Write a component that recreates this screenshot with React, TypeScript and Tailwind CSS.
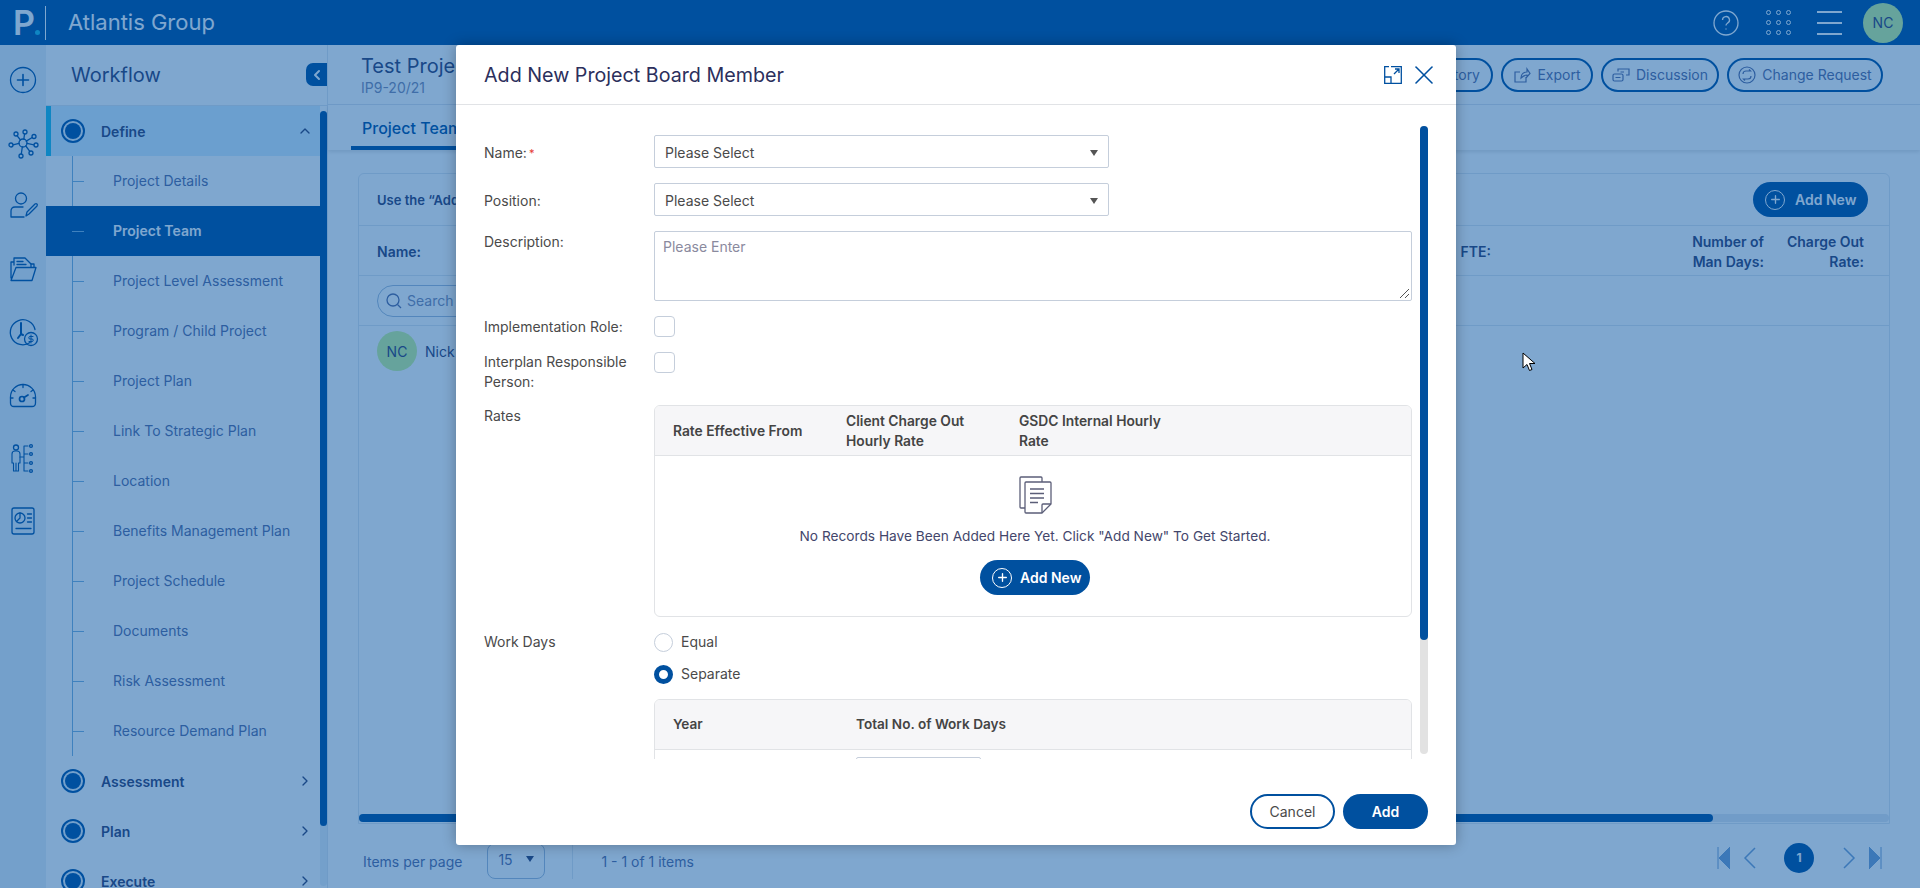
import React from 'react';
import { ChevronLeft, ChevronUp, ChevronRight, Plus, X } from 'lucide-react';

const font = { fontFamily: 'Inter, "Liberation Sans", sans-serif' };

const defineItems = [
  'Project Details',
  'Project Team',
  'Project Level Assessment',
  'Program / Child Project',
  'Project Plan',
  'Link To Strategic Plan',
  'Location',
  'Benefits Management Plan',
  'Project Schedule',
  'Documents',
  'Risk Assessment',
  'Resource Demand Plan',
];

const RailIcon = ({ children }: { children: React.ReactNode }) => (
  <div className="h-[63px] flex items-center justify-center">
    <svg width="32" height="32" viewBox="0 0 32 32" fill="none" stroke="#0050a0" strokeWidth="1.3" strokeLinecap="round" strokeLinejoin="round">
      {children}
    </svg>
  </div>
);

const Rail = () => (
  <aside className="w-[46px] shrink-0 bg-[#e8f0f7] flex flex-col pt-[3px]">
    <RailIcon>
      <circle cx="16" cy="16" r="12.5" />
      <path d="M16 10.5v11M10.5 16h11" strokeWidth="1.6" />
    </RailIcon>
    <RailIcon>
      <circle cx="16" cy="16" r="4" />
      <circle cx="9" cy="7" r="2" /><circle cx="18" cy="5" r="2" /><circle cx="27" cy="9.5" r="2" /><circle cx="29" cy="18" r="2" />
      <circle cx="24" cy="26" r="2" /><circle cx="14" cy="29" r="2" /><circle cx="4" cy="18" r="2" />
      <path d="M10 8.6l3.5 4.4M17.6 7l-.8 5M25.2 10.5l-6 3.6M27 17.8l-7-1.4M22.8 24.4l-4-5.4M14.3 27l1-7M6 17.8l6-1.4" />
    </RailIcon>
    <RailIcon>
      <circle cx="14" cy="8.5" r="5.5" />
      <path d="M16 17H8c-2.8 0-4 2-4 4v6h13" />
      <path d="M19 26l1-4 8-8c1.5-1 3 .5 2 2l-8 8z" />
    </RailIcon>
    <RailIcon>
      <path d="M4 25V9h3M7 12V5h11l6 6v3M10 8.5h6M10 11.5h9M4 27.5h21l4-13H9L4 27.5z" />
      <path d="M24 11h3v3" />
    </RailIcon>
    <RailIcon>
      <path d="M23 26.5A12.5 12.5 0 1 1 28 13.5" />
      <path d="M14 7v11l-3 4M14 18l2 1" strokeWidth="2" />
      <circle cx="24" cy="23" r="6.5" />
      <path d="M26 20.5h-3a1.2 1.2 0 0 0 0 2.5h2a1.2 1.2 0 0 1 0 2.5h-3M24 19v8" strokeWidth="1" />
    </RailIcon>
    <RailIcon>
      <path d="M7 27.5h18c2 0 3.5-1.5 3.5-3.5V18A12.5 12.5 0 0 0 3.5 18v6c0 2 1.5 3.5 3.5 3.5z" />
      <path d="M16 5.5v3M6 11l2 1.5M26 11l-2 1.5M3.5 19H6M28.500 19H26" />
      <circle cx="15" cy="20" r="2.5" strokeWidth="1.7" />
      <path d="M17 18.5l4-2.5" strokeWidth="1.7" />
    </RailIcon>
    <RailIcon>
      <circle cx="9" cy="5.5" r="2.5" />
      <path d="M6.5 29V21H5V12c0-2 1-3 3-3h2c2 0 3 1 3 3v9h-1.5v8zM9 21v8" strokeWidth="1.1" />
      <path d="M13 15h4M17 4v25M17 4h4M17 12h4M17 21h4M17 29h4" strokeWidth="1.1" />
      <circle cx="24" cy="4" r="1.4" /><circle cx="24" cy="12" r="1.4" /><circle cx="24" cy="21" r="1.4" /><circle cx="24" cy="29" r="1.4" />
    </RailIcon>
    <RailIcon>
      <rect x="5" y="3" width="22" height="26" rx="2" />
      <circle cx="13" cy="13" r="5" />
      <path d="M13 8v5l-3.5 3.5M20.5 9h4M20.5 13h4M20.5 17h4M9 23.5h15" />
    </RailIcon>
  </aside>
);

const StepRow = ({ label, open }: { label: string; open?: boolean }) => (
  <div className={`relative h-[50px] shrink-0 flex items-center ${open ? 'bg-[#d6eeff]' : ''}`}>
    {open && <div className="absolute left-0 top-0 bottom-0 w-[5px] bg-[#1ebce6]" />}
    <span className="ml-[15px] w-[24px] h-[24px] rounded-full border-2 border-[#0050a0] bg-[#e8f0f7] flex items-center justify-center shrink-0">
      <span className="w-[16px] h-[16px] rounded-full bg-[#0050a0]" />
    </span>
    <span className="ml-[16px] text-[14px] font-semibold text-[#33406f] flex-1">{label}</span>
    {open ? (
      <ChevronUp size={16} color="#33406f" className="mr-[7px]" />
    ) : (
      <ChevronRight size={16} color="#33406f" className="mr-[7px]" />
    )}
  </div>
);

const Sidebar = () => (
  <aside className="relative w-[282px] shrink-0 bg-white border-r border-[#dfe6ef] flex flex-col overflow-hidden">
    <div className="h-[61px] shrink-0 border-b border-[#dfe6ef] flex items-center pl-[25px] text-[20px] text-[#33406f]">
      Workflow
    </div>
    <div className="absolute right-0 top-[18px] w-[21px] h-[23px] rounded-l-[7px] bg-[#00509f] flex items-center justify-center">
      <ChevronLeft size={16} color="#fff" strokeWidth={3} />
    </div>
    <div className="flex flex-col pr-[7px]">
      <StepRow label="Define" open />
      <div className="relative bg-white">
        <div className="absolute left-[26px] top-0 bottom-0 w-px bg-[#7fb3dd]" />
        {defineItems.map((item) => {
          const active = item === 'Project Team';
          return (
            <div key={item} className={`relative h-[50px] flex items-center pl-[67px] pb-[2px] text-[14px] ${active ? 'bg-[#00509f] text-white font-semibold' : 'text-[#5a6ca0]'}`}>
              <div className="absolute left-[26px] top-[25px] w-[12px] h-px bg-[#7fb3dd]" />
              {item}
            </div>
          );
        })}
      </div>
      <StepRow label="Assessment" />
      <StepRow label="Plan" />
      <StepRow label="Execute" />
    </div>
    <div className="absolute right-0 top-[66px] bottom-[2px] w-[7px] rounded-full bg-[#e8f0f7]" />
    <div className="absolute right-0 top-[66px] h-[715px] w-[7px] rounded-full bg-[#00509f]" />
  </aside>
);

const HeaderButton = ({ label, icon, className }: { label: string; icon?: React.ReactNode; className: string }) => (
  <div className={`h-[34px] rounded-full border-2 border-[#00509f] flex items-center justify-center gap-[6px] text-[14px] text-[#5a6ca0] ${className}`}>
    {icon}
    {label}
  </div>
);

const AddNewButton = ({ className }: { className: string }) => (
  <div className={`h-[35px] rounded-full bg-[#00509f] text-white font-semibold text-[14px] flex items-center ${className}`}>
    <span className="w-[20px] h-[20px] rounded-full border-[1.5px] border-white flex items-center justify-center">
      <Plus size={13} color="#fff" strokeWidth={2.5} />
    </span>
    Add New
  </div>
);

const Content = () => (
  <main className="flex-1 min-w-0 flex flex-col relative">
    <div className="h-[60px] shrink-0 border-b border-[#dfe6ef] flex items-center pl-[33px] pr-[37px]">
      <div>
        <div className="text-[20px] leading-[26px] text-[#33406f]">Test Project</div>
        <div className="text-[14px] leading-[18px] text-[#7f8bb0]">IP9-20/21</div>
      </div>
      <div className="ml-auto flex gap-[8px]">
        <HeaderButton label="History" className="w-[100px] !justify-end pr-[11px]" />
        <HeaderButton label="Export" className="w-[92px]" icon={
          <svg width="18" height="18" viewBox="0 0 18 18" fill="none" stroke="#5a6ca0" strokeWidth="1.2"><path d="M13 11v5H2V6h5M8 12c0-4 3-6 6-6V3l3 4.5L14 11V9c-2 0-4 1-6 3z" /></svg>
        } />
        <HeaderButton label="Discussion" className="w-[118px]" icon={
          <svg width="18" height="18" viewBox="0 0 18 18" fill="none" stroke="#5a6ca0" strokeWidth="1.2"><rect x="1" y="8" width="10" height="7" rx="1.5" /><path d="M6 5.5V3h11v6h-3M8.5 6H12M3.5 11.5h5" /></svg>
        } />
        <HeaderButton label="Change Request" className="w-[156px]" icon={
          <svg width="18" height="18" viewBox="0 0 18 18" fill="none" stroke="#5a6ca0" strokeWidth="1.2"><circle cx="9" cy="9" r="8" /><path d="M5 8c0-2 1.5-3 3-3h4.5L11 3.5M13 10c0 2-1.5 3-3 3H5.5L7 14.5" /></svg>
        } />
      </div>
    </div>
    <div className="h-[45px] shrink-0 flex shadow-[0_2px_4px_rgba(0,0,0,0.12)] bg-white">
      <div className="ml-[23px] w-[140px] h-[45px] border-b-[4px] border-[#00509f] pl-[11px] pt-[11px] text-[16px] font-medium text-[#00509f]">
        Project Team
      </div>
    </div>
    <div className="flex-1 flex flex-col pl-[30px] pr-[30px] pt-[23px]">
      <div className="h-[651px] border border-[#dfe6ef] rounded-t-[6px] flex flex-col relative">
        <div className="h-[52px] shrink-0 border-b border-[#dfe6ef] flex items-center justify-between pl-[18px] pr-[21px] text-[13px] font-semibold text-[#33406f]">
          <span className="pt-[2px]">Use the “Add New” button to add project team members</span>
          <AddNewButton className="w-[115px] pl-[12px] gap-[10px]" />
        </div>
        <div className="h-[50px] shrink-0 border-b border-[#dfe6ef] flex items-center pl-[18px] pt-[2px] text-[14px] font-semibold text-[#33406f]">
          <span>Name:</span>
          <span className="ml-auto mr-[183px]">FTE:</span>
          <span className="w-[90px] text-right leading-[20px]">Number of Man Days:</span>
          <span className="w-[100px] text-right leading-[20px] mr-[25px]">Charge Out Rate:</span>
        </div>
        <div className="h-[50px] shrink-0 border-b border-[#dfe6ef] flex items-center pl-[18px]">
          <div className="w-[170px] h-[32px] rounded-full border border-[#a6bdd8] flex items-center gap-[5px] pl-[8px] text-[14px] text-[#7f8bb0]">
            <svg width="16" height="16" viewBox="0 0 16 16" fill="none" stroke="#5a6ca0" strokeWidth="1.3"><circle cx="7" cy="7" r="6" /><path d="M11.5 11.5L15 15" /></svg>
            Search
          </div>
        </div>
        <div className="flex items-center pl-[18px] pt-[5px] text-[14px] text-[#33406f]">
          <span className="w-[40px] h-[40px] rounded-full bg-[#ccf699] flex items-center justify-center text-[#33406f]">NC</span>
          <span className="ml-[8px]">Nick Cowan</span>
        </div>
        <div className="absolute left-0 right-0 bottom-[1px] h-[8px] rounded-full bg-[#e2e8f0]">
          <div className="w-[1354px] h-[8px] rounded-full bg-[#00509f]" />
        </div>
      </div>
      <div className="flex items-center h-[60px] pt-[14px] text-[14px] text-[#5a6ca0]">
        <span className="ml-[5px]">Items per page</span>
        <div className="ml-[25px] w-[58px] h-[36px] border border-[#a6bdd8] rounded-[8px] flex items-center justify-between px-[10px] pb-[4px]">
          15
          <span className="w-0 h-0 border-x-[4px] border-x-transparent border-t-[6px] border-t-[#33406f]" />
        </div>
        <div className="ml-[27px] h-[36px] border-l border-[#dfe6ef]" />
        <span className="ml-[28px]">1 - 1 of 1 items</span>
        <div className="ml-auto mr-[8px] -mt-[6px] flex items-center">
          <svg width="13" height="22" viewBox="0 0 13 22" fill="#78a0d0" stroke="#78a0d0"><path d="M1 0v22" fill="none" /><path d="M13 0v22L2 11z" /></svg>
          <svg className="ml-[13px]" width="13" height="22" viewBox="0 0 13 22" fill="none" stroke="#78a0d0" strokeWidth="1.5"><path d="M12 1L2 11l10 10" /></svg>
          <span className="ml-[28px] w-[30px] h-[30px] rounded-full bg-[#00509f] flex items-center justify-center text-white text-[12px] font-bold">1</span>
          <svg className="ml-[29px]" width="13" height="22" viewBox="0 0 13 22" fill="none" stroke="#78a0d0" strokeWidth="1.5"><path d="M1 1l10 10L1 21" /></svg>
          <svg className="ml-[13px]" width="13" height="22" viewBox="0 0 13 22" fill="#78a0d0" stroke="#78a0d0"><path d="M12 0v22" fill="none" /><path d="M0 0v22l11-11z" /></svg>
        </div>
      </div>
    </div>
  </main>
);

const FormLabel = ({ children, className = '' }: { children: React.ReactNode; className?: string }) => (
  <div className={`w-[170px] shrink-0 pr-[12px] text-[14px] leading-[20px] text-[#4a4a4a] ${className}`}>{children}</div>
);

const SelectBox = () => (
  <div className="w-[455px] h-[33px] border border-[#c5cedb] rounded-[2px] flex items-center justify-between pl-[10px] pr-[10px] pt-[2px] text-[14px] text-[#4a4a4a]">
    Please Select
    <span className="w-0 h-0 border-x-[4.5px] border-x-transparent border-t-[6px] border-t-[#555]" />
  </div>
);

const Checkbox = () => <div className="w-[21px] h-[21px] border border-[#c5cedb] rounded-[4px]" />;

const Modal = () => (
  <div className="relative w-[1000px] h-[800px] bg-white rounded-[3px] shadow-[0_0_14px_rgba(0,0,0,0.3)] flex flex-col">
    <div className="h-[60px] shrink-0 border-b border-[#e1e3e6] flex items-center pl-[28px] pr-[16px]">
      <span className="text-[19.7px] pt-[2px] text-[#2c2f5c] flex-1">Add New Project Board Member</span>
      <svg width="18" height="18" viewBox="0 0 18 18" fill="none" stroke="#0050a0" strokeWidth="1.3">
        <path d="M7 .7h10.3v16.600H7M.7 11V.7H5M.7 11v6.300H7V11zM10 8l5-5M11 3h4v4" />
      </svg>
      <X size={32} color="#0050a0" strokeWidth={1.2} className="ml-[6px]" />
    </div>
    <div className="relative h-[654px] shrink-0 overflow-hidden pl-[28px] pr-[44px] pt-[30px]">
      <div className="flex items-center">
        <FormLabel className="pt-[2px]">Name:<span className="text-[#e53935] text-[11px] align-top ml-[2px]">*</span></FormLabel>
        <SelectBox />
      </div>
      <div className="flex items-center mt-[15px]">
        <FormLabel className="pt-[2px]">Position:</FormLabel>
        <SelectBox />
      </div>
      <div className="flex mt-[15px]">
        <FormLabel className="pt-[1px]">Description:</FormLabel>
        <div className="relative flex-1 h-[70px] border border-[#c5cedb] rounded-[2px] pl-[8px] pt-[5px] text-[14px] leading-[20px] text-[#8a8a9e]">
          Please Enter
          <svg className="absolute right-[1px] bottom-[1px]" width="11" height="11" viewBox="0 0 11 11" stroke="#555" strokeWidth="1"><path d="M1 10l9-9M6 10l4-4" /></svg>
        </div>
      </div>
      <div className="flex items-center mt-[15px]">
        <FormLabel>Implementation Role:</FormLabel>
        <Checkbox />
      </div>
      <div className="flex mt-[15px]">
        <FormLabel>Interplan Responsible Person:</FormLabel>
        <Checkbox />
      </div>
      <div className="flex mt-[13px]">
        <FormLabel className="pt-[1px]">Rates</FormLabel>
        <div className="flex-1 h-[212px] border border-[#e1e3e6] rounded-[6px] overflow-hidden flex flex-col">
          <div className="h-[50px] shrink-0 bg-[#f6f6f8] border-b border-[#e1e3e6] flex items-center pl-[18px] text-[13.8px] leading-[20px] font-semibold text-[#444]">
            <span className="w-[173px]">Rate Effective From</span>
            <span className="w-[173px] pr-[20px]">Client Charge Out Hourly Rate</span>
            <span className="w-[173px] pr-[20px]">GSDC Internal Hourly Rate</span>
          </div>
          <div className="flex-1 flex flex-col items-center pt-[20px] pl-[4px]">
            <svg width="33" height="38" viewBox="0 0 33 38" fill="none" stroke="#5b5e78" strokeWidth="1.3" strokeLinejoin="round">
              <path d="M6 32H2a1 1 0 0 1-1-1V2a1 1 0 0 1 1-1h20a1 1 0 0 1 1 1v4" />
              <path d="M7 6h24a1 1 0 0 1 1 1v21l-9 9H7a1 1 0 0 1-1-1V7a1 1 0 0 1 1-1z" />
              <path d="M32 28h-8a1 1 0 0 0-1 1v8M11 13h14M11 17.5h14M11 22h14M11 26.500h8" />
            </svg>
            <div className="mt-[12px] text-[13.7px] leading-[20px] text-[#43466b]">No Records Have Been Added Here Yet. Click "Add New" To Get Started.</div>
            <AddNewButton className="w-[110px] mt-[14px] pl-[12px] gap-[8px]" />
          </div>
        </div>
      </div>
      <div className="flex mt-[15px]">
        <FormLabel>Work Days</FormLabel>
        <div className="flex-1 flex flex-col">
          <div className="flex items-center gap-[8px] text-[14px] leading-[20px] text-[#4a4a4a]">
            <span className="w-[19px] h-[19px] rounded-full border border-[#c5cedb]" />
            Equal
          </div>
          <div className="flex items-center gap-[8px] mt-[12px] text-[14px] leading-[20px] text-[#4a4a4a]">
            <span className="w-[19px] h-[19px] rounded-full border-[5px] border-[#00509f]" />
            Separate
          </div>
          <div className="mt-[15px] border border-[#e1e3e6] rounded-[6px] overflow-hidden">
            <div className="h-[50px] bg-[#f6f6f8] border-b border-[#e1e3e6] flex items-center pl-[18px] text-[13.6px] font-semibold text-[#444]">
              <span className="w-[183px]">Year</span>
              <span>Total No. of Work Days</span>
            </div>
            <div className="h-[50px] pl-[201px] pt-[7px]">
              <div className="w-[125px] h-[33px] border border-[#c5cedb] rounded-[2px]" />
            </div>
          </div>
        </div>
      </div>
      <div className="absolute right-[28px] top-[21px] w-[8px] h-[628px] rounded-full bg-[#e2e2e2]">
        <div className="w-[8px] h-[514px] rounded-full bg-[#00509f]" />
      </div>
    </div>
    <div className="flex-1 flex items-start justify-end gap-[8px] pr-[28px] pt-[35px] text-[14px]">
      <div className="w-[85px] h-[35px] rounded-full border-2 border-[#00509f] flex items-center justify-center text-[#4a4a4a]">Cancel</div>
      <div className="w-[85px] h-[35px] rounded-full bg-[#00509f] flex items-center justify-center text-white font-semibold">Add</div>
    </div>
  </div>
);

const App = () => (
  <div className="relative h-screen overflow-hidden flex flex-col bg-white" style={font}>
    <header className="h-[45px] shrink-0 bg-[#00509f] flex items-center text-white">
      <div className="w-[46px] h-[34px] border-r border-white flex items-center pl-[13px] font-semibold text-[34px] leading-none">
        P<span className="w-[5px] h-[5px] rounded-full bg-[#1ebce6] self-end mb-[5px]" />
      </div>
      <span className="ml-[22px] text-[22px]">Atlantis Group</span>
      <div className="ml-auto flex items-center">
        <svg width="26" height="26" viewBox="0 0 26 26" fill="none" stroke="#fff" strokeWidth="1.3">
          <circle cx="13" cy="13" r="12" />
          <path d="M9.5 10a3.5 3.5 0 1 1 5 3.2c-1 .6-1.5 1.2-1.5 2.3M13 18.5v1" />
        </svg>
        <div className="ml-[27px] grid grid-cols-3 gap-x-[5px] gap-y-[5px]">
          {[1, 2, 3, 4, 5, 6, 7, 8, 9].map((n) => (
            <span key={n} className="w-[5px] h-[5px] rounded-full border border-white" />
          ))}
        </div>
        <div className="ml-[26px] w-[25px] flex flex-col gap-[9px]">
          <span className="h-[2px] bg-white" />
          <span className="h-[2px] bg-white" />
          <span className="h-[2px] bg-white" />
        </div>
        <span className="ml-[21px] mr-[17px] w-[40px] h-[40px] rounded-full bg-[#ccf699] text-[#33406f] text-[14px] flex items-center justify-center">NC</span>
      </div>
    </header>
    <div className="flex-1 flex min-h-0">
      <Rail />
      <Sidebar />
      <Content />
    </div>
    {/* backdrop */}
    <div className="absolute inset-0 bg-[#00509f]/50 pt-[45px] pl-[456px]">
      <Modal />
    </div>
    {/* mouse pointer in the capture */}
    <svg className="absolute left-[1522px] top-[352px]" width="14" height="20" viewBox="0 0 14 20" fill="#fff" stroke="#000" strokeWidth="1">
      <path d="M1 1v15l4-3.5 2.5 6 2.5-1-2.500-6H13z" />
    </svg>
  </div>
);

export default App;
